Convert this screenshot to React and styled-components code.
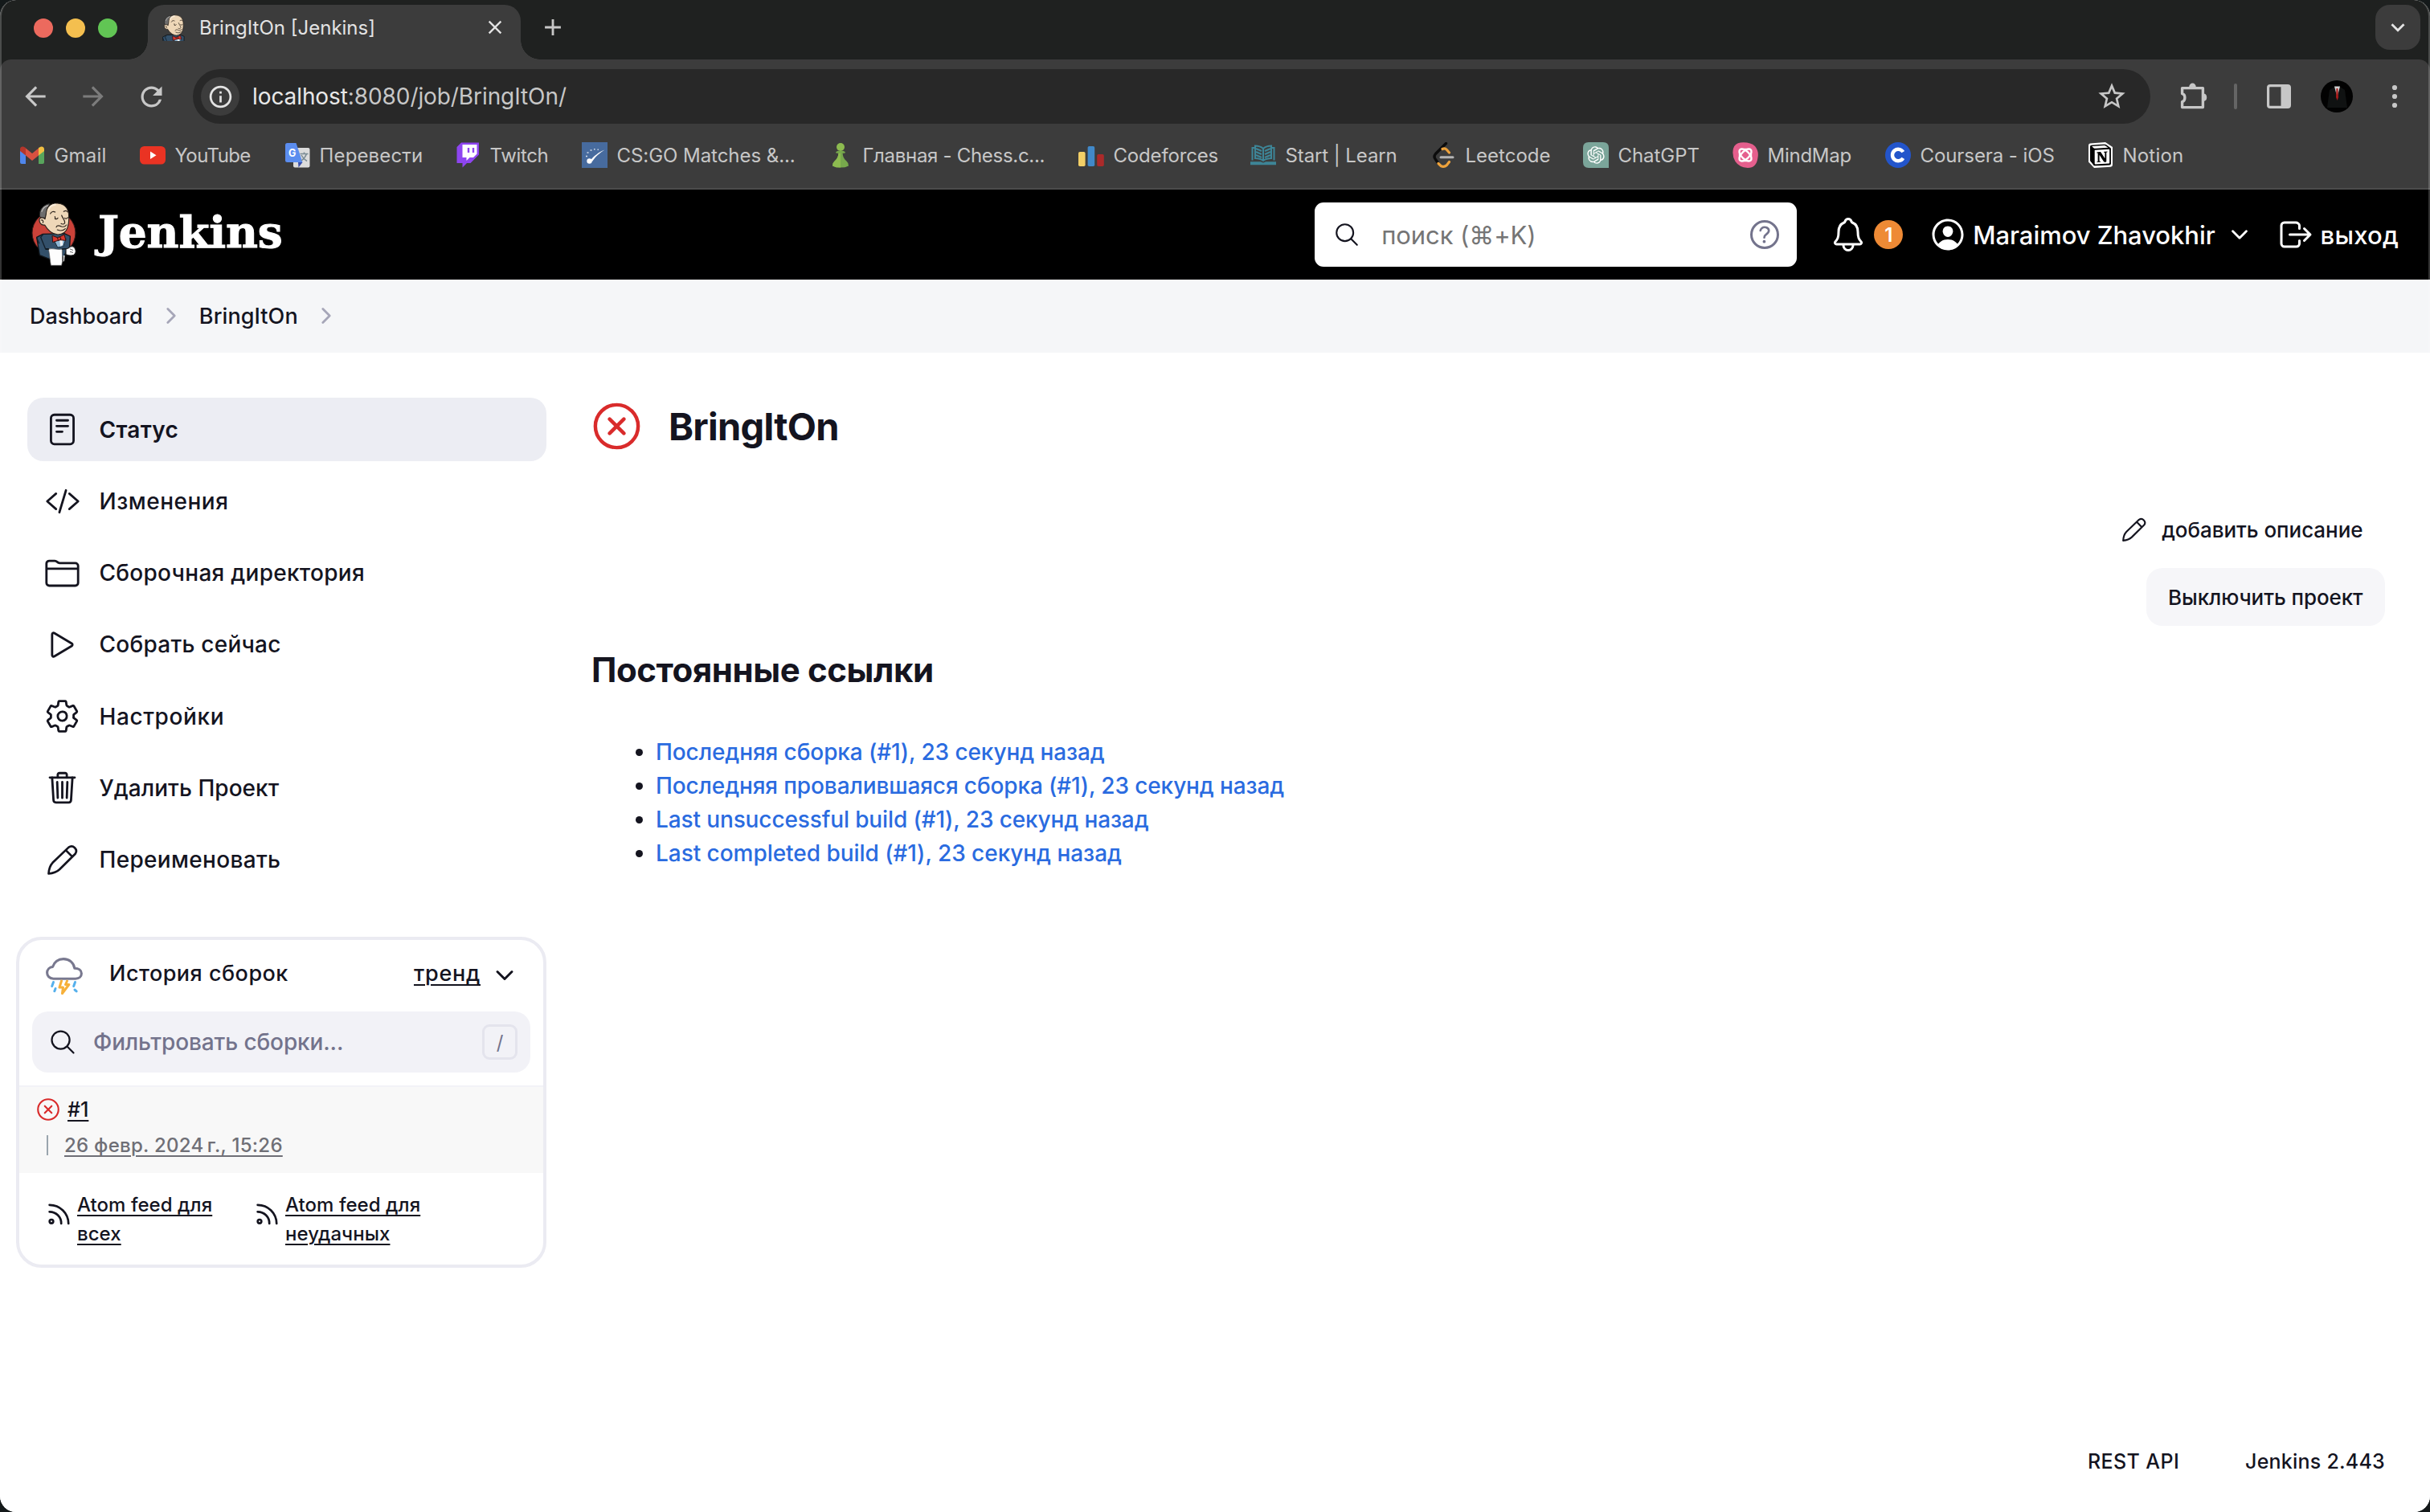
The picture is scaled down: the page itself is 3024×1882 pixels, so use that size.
import React from "react";
import styled, { createGlobalStyle } from "styled-components";
import {
  IoSearchOutline, IoHelpCircleOutline, IoPersonCircleOutline, IoNotificationsOutline, IoLogOutOutline,
  IoChevronDownOutline, IoChevronForwardOutline, IoReaderOutline, IoCodeSlashOutline, IoFolderOutline,
  IoPlayOutline, IoSettingsOutline, IoTrashOutline, IoCloseCircleOutline,
} from "react-icons/io5";
import { MdArrowBack, MdArrowForward, MdRefresh, MdInfoOutline, MdStarBorder, MdClose, MdAdd, MdExpandMore } from "react-icons/md";
import { SiNotion } from "react-icons/si";
import { RiOpenaiFill } from "react-icons/ri";

const GlobalStyle = createGlobalStyle`
  * { box-sizing: border-box; }
  html, body { margin: 0; padding: 0; background: #14191a; }
  body { font-family: Inter, "Noto Sans", "Liberation Sans", sans-serif; color: #14141f; overflow: hidden; }
  svg { display: block; flex: none; }
  h1, h2, ul { margin: 0; padding: 0; }
`;

const Text = styled.span`
  font-size: ${(p) => p.$size}px;
  font-weight: ${(p) => p.$weight || 500};
  letter-spacing: ${(p) => p.$track || 0}px;
  white-space: pre;
`;

/* ---------- browser window ---------- */

const Window = styled.div`
  position: relative;
  width: 3024px;
  height: 1882px;
  display: flex;
  flex-direction: column;
  border-radius: 20px;
  overflow: hidden;
  background: #fff;
`;

const WindowEdge = styled.div`
  position: absolute;
  inset: 0;
  border: 2px solid rgba(255, 255, 255, 0.2);
  border-top-width: 0;
  border-radius: 20px;
  pointer-events: none;
`;

const TabStrip = styled.div`
  height: 74px;
  flex: none;
  display: flex;
  background: #1f2120;
`;

const TrafficLights = styled.div`
  display: flex;
  gap: 16px;
  padding: 23px 0 0 42px;
  width: 184px;
`;

const Light = styled.span`
  width: 24px;
  height: 24px;
  border-radius: 50%;
  background: ${(p) => p.$color};
`;

const Tab = styled.div`
  position: relative;
  width: 464px;
  height: 68px;
  margin-top: 6px;
  padding: 0 18px 12px 18px;
  display: flex;
  align-items: center;
  border-radius: 20px 20px 0 0;
  background: #3c3c3c;
  color: #e3e3e3;
  &::before, &::after {
    content: "";
    position: absolute;
    bottom: 0;
    width: 24px;
    height: 24px;
  }
  &::before { left: -24px; background: radial-gradient(circle at 0 0, transparent 23.5px, #3c3c3c 24px); }
  &::after { right: -24px; background: radial-gradient(circle at 100% 0, transparent 23.5px, #3c3c3c 24px); }
`;

const TabTitle = styled(Text)`
  margin-left: 17px;
  flex: 1;
`;

const NewTab = styled.div`
  height: 68px;
  padding: 0 0 0 23px;
  display: flex;
  align-items: center;
  color: #c7c7c7;
`;

const TabMenu = styled.div`
  margin: 6px 12px 0 auto;
  width: 56px;
  height: 56px;
  border-radius: 18px;
  background: #3c3c3c;
  display: flex;
  align-items: center;
  justify-content: center;
  color: #e3e3e3;
`;

const ToolbarBack = styled.div`
  background: #1f2120;
  flex: none;
`;

const Toolbar = styled.div`
  height: 92px;
  padding-left: 8px;
  display: flex;
  align-items: center;
  background: #3c3c3c;
  border-radius: 14px 14px 0 0;
`;

const ToolButton = styled.span`
  width: 72px;
  height: 68px;
  margin-left: ${(p) => p.$before || 0}px;
  display: flex;
  align-items: center;
  justify-content: center;
  color: ${(p) => (p.$dim ? "#7c7c7c" : "#c7c7c7")};
`;

const ToolDivider = styled.span`
  width: 4px;
  height: 32px;
  border-radius: 2px;
  margin: 0 16px 0 14px;
  background: #656565;
`;

const Avatar = styled.svg`
  border-radius: 50%;
`;

const Omnibox = styled.div`
  width: 2436px;
  height: 68px;
  margin-left: 16px;
  padding: 0 28px 0 10px;
  display: flex;
  align-items: center;
  border-radius: 34px;
  background: #282828;
  color: #c7c7c7;
`;

const SiteInfo = styled.span`
  width: 48px;
  height: 48px;
  border-radius: 50%;
  background: #3c3c3c;
  color: #e3e3e3;
  display: flex;
  align-items: center;
  justify-content: center;
`;

const Url = styled(Text)`
  margin-left: 16px;
  flex: 1;
  b { font-weight: 400; color: #e8e8e8; }
`;

const Bookmarks = styled.div`
  height: 70px;
  flex: none;
  display: flex;
  align-items: center;
  padding: 0 0 14px 24px;
  background: #3c3c3c;
  border-bottom: 2px solid #4c4c4c;
  color: #c7c7c7;
`;

const Bookmark = styled.div`
  width: ${(p) => p.$width}px;
  flex: none;
  display: flex;
  align-items: center;
  gap: 11.5px;
`;

/* ---------- Jenkins page ---------- */

const Header = styled.header`
  height: 112px;
  flex: none;
  display: flex;
  align-items: center;
  padding: 0 39px;
  background: #000;
  color: #fff;
`;

const Brand = styled.span`
  margin: 0 auto 8px 27px;
  font: 700 55px "DejaVu Serif", serif;
  letter-spacing: -0.2px;
  -webkit-text-stroke: 1px #fff;
`;

const SearchBox = styled.div`
  width: 600px;
  height: 80px;
  border-radius: 11px;
  background: #fff;
  display: flex;
  align-items: center;
  padding: 0 16px 0 23px;
  color: #14141f;
`;

const Placeholder = styled(Text)`
  flex: 1;
  margin-left: ${(p) => p.$gap}px;
  color: ${(p) => p.$color};
`;

const HeaderItem = styled.span`
  display: flex;
  align-items: center;
  margin-left: ${(p) => p.$before}px;
  gap: ${(p) => p.$gap || 0}px;
`;

const Badge = styled.span`
  width: 36px;
  height: 36px;
  border-radius: 50%;
  background: #ee8a35;
  display: flex;
  align-items: center;
  justify-content: center;
`;

const Breadcrumbs = styled.nav`
  height: 91px;
  flex: none;
  display: flex;
  align-items: center;
  gap: 20px;
  padding: 0 0 1px 37px;
  background: #f5f6f8;
`;

const Page = styled.div`
  flex: 1;
  display: flex;
  background: #fff;
`;

const Sidebar = styled.aside`
  width: 680px;
  flex: none;
  padding: 56px 0 0 20px;
`;

const Tasks = styled.div`
  margin-left: 14px;
  display: flex;
  flex-direction: column;
  gap: 10.3px;
`;

const Task = styled.div`
  height: 79px;
  border-radius: 20px;
  display: flex;
  align-items: center;
  gap: 23.5px;
  padding-left: 21px;
  background: ${(p) => (p.$active ? "#ecedf3" : "transparent")};
`;

const IconSlot = styled.span`
  width: 45px;
  display: flex;
  justify-content: center;
`;

const BuildHistory = styled.section`
  margin-top: 56.4px;
  height: 412px;
  border: 4px solid #ebebf2;
  border-radius: 32px;
  overflow: hidden;
`;

const HistoryHead = styled.div`
  height: 89px;
  display: flex;
  align-items: center;
  padding: 0 32px 0 33px;
`;

const HistoryTitle = styled(Text)`
  margin: 0 auto 6px 33px;
`;

const Link = styled(Text)`
  color: ${(p) => p.$color || "#14141f"};
  line-height: ${(p) => p.$line || "inherit"};
  text-decoration: underline;
  text-decoration-thickness: 2.4px;
  text-underline-offset: 4px;
`;

const TrendLink = styled(Link)`
  margin: 0 14px 6px 0;
`;

const TrendToggle = styled.span`
  margin-bottom: 2px;
`;

const Filter = styled.div`
  height: 76px;
  margin: 0 16px 16px;
  border-radius: 20px;
  background: #f2f2f7;
  display: flex;
  align-items: center;
  padding: 0 16px 0 20px;
`;

const Key = styled.kbd`
  width: 44px;
  height: 44px;
  border: 3px solid #e4e4ed;
  border-radius: 9px;
  display: flex;
  align-items: center;
  justify-content: center;
  font: 400 24px Inter, sans-serif;
  color: #73738c;
`;

const BuildRow = styled.div`
  height: 109px;
  border-top: 2px solid #f2f2f7;
  background: #f8f8f8;
`;

const BuildName = styled.div`
  height: 56px;
  display: flex;
  align-items: center;
  gap: 7px;
  padding-left: 19px;
`;

const BuildDate = styled.div`
  height: 33px;
  display: flex;
  align-items: center;
  gap: 20px;
  padding-left: 34px;
`;

const DateBar = styled.span`
  width: 2px;
  height: 25px;
  background: #9aa5ae;
`;

const Feeds = styled.div`
  display: flex;
  padding: 22px 0 0 36px;
`;

const Feed = styled.div`
  width: 259px;
  display: flex;
  gap: 9px;
  align-items: flex-start;
`;

const FeedIcon = styled.svg`
  margin-top: 16px;
`;

const Main = styled.main`
  flex: 1;
  padding: 56px 56px 0 58px;
  display: flex;
  flex-direction: column;
`;

const TitleRow = styled.div`
  height: 71px;
  margin-left: -6px;
  display: flex;
  align-items: center;
  gap: 29px;
`;

const Title = styled.h1`
  font-size: 47px;
  font-weight: 700;
  letter-spacing: -0.8px;
`;

const Actions = styled.div`
  margin-top: 57px;
  display: flex;
  flex-direction: column;
  align-items: flex-end;
  gap: 12px;
`;

const Action = styled.button`
  height: 72px;
  padding: 0 27.5px;
  border: 0;
  border-radius: 20px;
  display: flex;
  align-items: center;
  gap: 19px;
  font-family: inherit;
  color: #14141f;
  background: ${(p) => (p.$filled ? "#f6f6f9" : "transparent")};
`;

const Subtitle = styled.h2`
  margin: 25px 0 0 -2px;
  font-size: 42px;
  line-height: 60px;
  font-weight: 700;
  letter-spacing: -0.41px;
`;

const Permalinks = styled.ul`
  margin-top: 51px;
  padding-left: 53px;
  list-style: none;
`;

const Permalink = styled.li`
  height: 42px;
  display: flex;
  align-items: center;
  gap: 16px;
  color: #2a6be0;
  &::before {
    content: "";
    width: 9px;
    height: 9px;
    border-radius: 50%;
    background: #14141f;
  }
`;

const Footer = styled.footer`
  margin-top: auto;
  display: flex;
  justify-content: flex-end;
  gap: 82px;
  padding-bottom: 43px;
  line-height: 40px;
`;

/* ---------- drawings ---------- */

const Butler = ({ width, height, viewBox, disc }) => (
  <svg width={width} height={height} viewBox={viewBox} strokeLinejoin="round" strokeLinecap="round">
    {disc && <circle cx="201" cy="162" r="81" fill="#cb4239" stroke="#3a1a18" strokeWidth="3" />}
    <path d="M160 166 L137 178 L148 245 L184 259 L240 250 L250 222 L260 218 L262 174 L240 164 Z" fill="#33506a" stroke="#10161b" strokeWidth="4" />
    <path d="M160 168 L152 178 L170 222 L182 222 M137 180 L146 200" fill="none" stroke="#14202b" strokeWidth="4" />
    <path d="M200 186 L215 216 L236 212 L246 184 Z" fill="#8fb6d3" stroke="#1b2a36" strokeWidth="3" />
    <path d="M222 188 L226 212 L234 206 L234 186 Z" fill="#f4f4f4" />
    <path d="M148 100 C146 76 158 58 186 52 L172 96 L166 110 Z" fill="#6d6c6c" stroke="#222" strokeWidth="3" />
    <path d="M156 82 C160 70 168 62 178 60" fill="none" stroke="#b5b3b1" strokeWidth="4" />
    <path d="M172 92 C173 62 190 50 214 51 C244 53 258 74 257 104 C258 116 256 130 252 142 C247 158 232 167 216 168 C196 166 178 152 167 132 C152 134 146 122 147 110 C152 102 164 104 168 110 Z" fill="#eed7b8" stroke="#28211c" strokeWidth="3.5" />
    <path d="M182 74 C184 66 194 58 206 56" fill="none" stroke="#f8ecd9" strokeWidth="7" />
    <path d="M188 90 C192 82 200 80 206 84 M238 82 C244 78 250 80 253 84 M205 108 C208 111 213 111 216 106 M205 101 L207 109 M241 106 C246 110 251 108 253 104 M230 96 C234 108 244 116 242 124 C240 130 232 130 228 127 M210 140 C214 130 224 136 230 138 C238 140 244 138 248 132 M214 150 C226 155 236 154 244 146 M154 114 C160 112 163 118 160 124" fill="none" stroke="#30261f" strokeWidth="3.5" />
    <path d="M196 172 L216 180 L240 168 L246 190 L224 188 L198 196 Z" fill="#d8382f" stroke="#36100d" strokeWidth="3" />
    <circle cx="221" cy="183" r="6" fill="#d8382f" stroke="#36100d" strokeWidth="3" />
    <path d="M246 222 L256 218 C264 208 274 212 278 216 C284 226 284 238 276 244 C266 248 256 246 246 242 Z" fill="#fff" stroke="#222" strokeWidth="3.5" />
    <path d="M262 222 L272 226 M262 232 L272 235" stroke="#444" strokeWidth="2.5" />
    <path d="M181 222 C198 218 216 226 232 222 L233 268 L230 283 L190 283 C186 262 186 244 181 222 Z" fill="#fdfdfd" stroke="#555" strokeWidth="2" />
    <path d="M236 246 L242 246 L240 266 L236 270 Z" fill="#ddd" />
    <path d="M172 222 L182 222 M232 222 L246 221" stroke="#10161b" strokeWidth="4" />
  </svg>
);

const Pencil = ({ size }) => (
  <svg width={size} height={size} viewBox="0 0 38 38" fill="none" stroke="#14141f" strokeWidth="2.7" strokeLinejoin="round" strokeLinecap="round">
    <path d="M1.5 36.5 C1.8 31 3.5 26 6.5 22.8 L26.5 3.6 a5.9 5.9 0 0 1 8.2 8.2 L15 31.2 C11.5 34.4 7 36 1.5 36.5 Z M23 7.4 l8 8" />
  </svg>
);

const Storm = () => (
  <svg width="46" height="46" viewBox="0 0 46 46" fill="none" strokeLinecap="round" strokeLinejoin="round">
    <path d="M9.5 26.2 C4.5 26.2 1.6 22.6 1.6 18.8 C1.6 14.8 4.6 11.8 8.6 11.4 C10.4 5.6 15.4 1.6 22 1.6 C29.4 1.6 34.8 6.4 35.8 13.2 C41 13.2 44.4 16 44.4 19.8 C44.4 23.6 41.4 26.2 37 26.2 Z" stroke="#78788f" strokeWidth="3.1" />
    <path d="M9.5 30.5 l-1.8 5 M36.5 30.5 l-1.8 5 M12 38.5 l-1.2 3.2 M36 40 l2.2 1.8" stroke="#55b0ec" strokeWidth="3" />
    <path d="M19.5 29 L17 37 H21.5 L20.5 44.5 L28.8 33.5 H24.5 L26.5 29" stroke="#f6b03a" strokeWidth="3" />
  </svg>
);

const Rss = () => (
  <FeedIcon width="27" height="27" viewBox="0 0 27 27" fill="none" stroke="#14141f" strokeWidth="2.7" strokeLinecap="round">
    <circle cx="4" cy="22.3" r="2.3" />
    <path d="M1.6 10.3 A14.4 14.4 0 0 1 16.2 25 M1.6 1.8 A23.4 23.4 0 0 1 25.2 25" />
  </FeedIcon>
);

const Puzzle = () => (
  <svg width="36" height="36" viewBox="0 0 36 36">
    <path d="M3.6 7.6 H29.4 V31.6 H3.6 V24.6 C8 23.8 8 15.4 3.6 14.6 Z" fill="none" stroke="#c7c7c7" strokeWidth="3.4" strokeLinejoin="round" />
    <path d="M12.2 6.2 a4.3 4.6 0 0 1 8.6 0 z M30.8 14.6 a4.3 4.8 0 0 1 0 9.4 z" fill="#c7c7c7" />
  </svg>
);

const SidePanel = () => (
  <svg width="30" height="30" viewBox="0 0 30 30">
    <rect x="1.6" y="1.6" width="26.8" height="26.8" rx="2.5" fill="none" stroke="#c7c7c7" strokeWidth="3.2" />
    <rect x="17.5" y="2" width="11" height="26" fill="#c7c7c7" />
  </svg>
);

const Suit = () => (
  <Avatar width="40" height="40" viewBox="0 0 40 40">
    <rect width="40" height="40" fill="#020202" />
    <path d="M11 12 L17 8 L24 8 L30 12 L33 34 H8 Z" fill="#101212" />
    <path d="M17 7.5 L24 7.5 L20.5 21 Z" fill="#d0d0d0" />
    <path d="M19.5 10 h1.8 l.7 11 l-1.4 4 l-1.6 -4 z" fill="#a81b1b" />
  </Avatar>
);

const Dots = () => (
  <svg width="8" height="30" viewBox="0 0 8 30" fill="#c7c7c7">
    <circle cx="4" cy="4" r="3.1" /><circle cx="4" cy="15" r="3.1" /><circle cx="4" cy="26" r="3.1" />
  </svg>
);

const Glyph = ({ children }) => <svg width="32" height="32" viewBox="0 0 32 32">{children}</svg>;

const glyphs = {
  gmail: (
    <Glyph>
      <path d="M1 9 V25 q0 2 2 2 H8 V14 Z" fill="#4f86ec" />
      <path d="M31 9 V25 q0 2 -2 2 H24 V14 Z" fill="#58a55c" />
      <path d="M24 7 L27 5.5 Q31 5 31 9 V11 L24 16.5 Z" fill="#f1bf42" />
      <path d="M8 7 L5 5.5 Q1 5 1 9 V11 L8 16.5 Z" fill="#b5362b" />
      <path d="M8 7.5 L16 14 L24 7.5 V16.5 L16 23 L8 16.5 Z" fill="#d95140" />
    </Glyph>
  ),
  youtube: (
    <Glyph>
      <rect x="0" y="5" width="32" height="22.5" rx="5.5" fill="#ea3323" />
      <path d="M13 11.5 L20.5 16.2 L13 21 Z" fill="#fff" />
    </Glyph>
  ),
  translate: (
    <Glyph>
      <rect x="11" y="7" width="20.5" height="24.5" rx="2" fill="#dcdcdc" />
      <path d="M17 25 L22.5 25 L17.5 31.5 Z" fill="#3c50a8" />
      <path d="M3.5 1 H14.5 L22.5 25 H3.5 Q1 25 1 22.5 V3.5 Q1 1 3.5 1 Z" fill="#5b8def" />
      <text x="5" y="18" fontFamily="Inter, sans-serif" fontSize="12.5" fontWeight="700" fill="#fff">G</text>
      <path d="M19.5 14.5 H29.5 M24.5 12.5 V14.5 M27.5 14.5 Q25.5 20 21 23 M21 16 Q23.5 21 28 23.5" fill="none" stroke="#7a8b94" strokeWidth="1.5" />
    </Glyph>
  ),
  twitch: (
    <Glyph>
      <path d="M8 0.5 L2.5 6 V26 H9.5 V31.5 L15 26 H19.5 L30 15.5 V0.5 Z" fill="#8e45f0" />
      <path d="M9.5 3 H27.5 V14.5 L23 19 H18.5 L14.5 23 V19 H9.5 Z" fill="#fff" />
      <path d="M17 7 V13 M23 7 V13" stroke="#8e45f0" strokeWidth="2.4" />
    </Glyph>
  ),
  csgo: (
    <Glyph>
      <rect width="32" height="32" fill="#476b9e" />
      <path d="M28.5 9.5 C22 12 14.5 17 9.5 24.5 L13 24 C17.5 17.5 22 13.5 28.5 9.5 Z" fill="#fff" />
      <circle cx="9.5" cy="23.5" r="3.2" fill="#fff" />
      <path d="M5 17.5 h2 M6.5 13 h2 M10.5 10 h2 M15 8.7 h1.6 M19.5 9.3 h1.4" stroke="#d5deea" strokeWidth="1.5" />
    </Glyph>
  ),
  chess: (
    <Glyph>
      <circle cx="16" cy="6" r="5" fill="#8dbb50" />
      <path d="M10 13 Q10 11.6 13 10.8 H19 Q22 11.6 22 13 Q22 13.8 18.6 13.8 C18.8 18 20.4 21 23.4 23.6 Q26.4 26.2 26 29.4 Q22 31.6 16 31.6 Q10 31.6 6 29.4 Q5.6 26.2 8.6 23.6 C11.6 21 13.2 18 13.4 13.8 Q10 13.8 10 13 Z" fill="#77a84c" />
      <path d="M13.4 13.8 H16 V31.6 Q10 31.6 6 29.4 Q5.6 26.2 8.6 23.6 C11.6 21 13.2 18 13.4 13.8 Z" fill="#8dbb50" />
    </Glyph>
  ),
  codeforces: (
    <Glyph>
      <rect x="0" y="12" width="8.6" height="18" rx="1.8" fill="#f2cf67" />
      <rect x="11.6" y="5" width="8.6" height="25" rx="1.8" fill="#4189c9" />
      <rect x="23.2" y="15" width="8.6" height="15" rx="1.8" fill="#ab2a2a" />
    </Glyph>
  ),
  book: (
    <Glyph>
      <path d="M0 24.3 H13 Q16 26.5 19 24.3 H32 V28.2 H0 Z" fill="#3d8597" />
      <path d="M2.5 22.5 V7 H5 M29.5 22.5 V7 H27 M6 4.5 Q12 4.5 16 8 Q20 4.5 26 4.5 V20 Q20 20 16 23 Q12 20 6 20 Z M16 8 V23" fill="none" stroke="#3d8597" strokeWidth="2" />
      <path d="M7 8 L14 11 M7 12 L14 15 M7 16 L14 19 M25 8 L18 11 M25 12 L18 15 M25 16 L18 19" stroke="#3d8597" strokeWidth="2.4" />
    </Glyph>
  ),
  leetcode: (
    <Glyph>
      <path d="M19.5 1.5 L6.5 14.5 Q3.5 18 6.5 21.5 L10 26.5" fill="none" stroke="#0c0c0c" strokeWidth="3.4" strokeLinecap="round" />
      <path d="M15 8.5 Q18 6.8 20.5 9.5 L23.5 13 M10 26.5 L13 29.5 Q17 31.5 20.5 28.5 L23.5 24.5" fill="none" stroke="#eda23c" strokeWidth="3.2" strokeLinecap="round" />
      <path d="M13 18.8 H28" stroke="#b4b4b4" strokeWidth="3" strokeLinecap="round" />
    </Glyph>
  ),
  chatgpt: (
    <Glyph>
      <path d="M7 0 H25 Q32 0 32 7 V32 H7 Q0 32 0 25 V7 Q0 0 7 0 Z" fill="#7ba59a" />
      <RiOpenaiFill x="3" y="3" size={26} color="#fff" />
    </Glyph>
  ),
  mindmap: (
    <Glyph>
      <path d="M10 0.5 Q22 -0.5 28 5 Q33 11 31.5 19 Q30 32 19 32 Q8 31 3.5 24 Q-1 16 1 8 Q3 1 10 0.5 Z" fill="#e55f8d" />
      <g fill="none" stroke="#fff" strokeWidth="2.2">
        <ellipse cx="16" cy="16" rx="9.5" ry="4.8" transform="rotate(45 16 16)" />
        <ellipse cx="16" cy="16" rx="9.5" ry="4.8" transform="rotate(-45 16 16)" />
        <rect x="8.5" y="8.5" width="15" height="15" rx="4" strokeWidth="1.4" />
      </g>
    </Glyph>
  ),
  coursera: (
    <Glyph>
      <circle cx="16" cy="16" r="16" fill="#2355cb" />
      <path d="M22.3 12.2 A7.2 7.2 0 1 0 22.3 19.8" fill="none" stroke="#fff" strokeWidth="4.4" />
    </Glyph>
  ),
  notion: (
    <Glyph>
      <path d="M3 1.5 L22 0 L31 6 V28 Q31 30.5 28.5 30.7 L8 32 L1 24.5 V4 Q1 1.8 3 1.5 Z" fill="#fff" />
      <path d="M3.5 6 L8.5 10 V29 L3.5 23.500 Z" fill="#000" />
      <SiNotion x="2.5" y="2.5" size={27} color="#000" />
    </Glyph>
  ),
};

const bookmarks = [
  ["gmail", "Gmail", 0.2, 150], ["youtube", "YouTube", -0.6, 180], ["translate", "Перевести", 0.15, 212],
  ["twitch", "Twitch", -0.35, 158], ["csgo", "CS:GO Matches &...", -0.05, 306], ["chess", "Главная - Chess.c...", -0.3, 312],
  ["codeforces", "Codeforces", -0.17, 214], ["book", "Start | Learn", -0.1, 224], ["leetcode", "Leetcode", 0, 190],
  ["chatgpt", "ChatGPT", -0.05, 186], ["mindmap", "MindMap", -0.25, 190], ["coursera", "Coursera - iOS", -0.08, 252],
  ["notion", "Notion", 0.2, 130],
];

const tasks = [
  [<IoReaderOutline size={45} />, "Статус", 0.29, true],
  [<IoCodeSlashOutline size={44} />, "Изменения", 0.5],
  [<IoFolderOutline size={45} />, "Сборочная директория", 0.28],
  [<IoPlayOutline size={45} />, "Собрать сейчас", 0.24],
  [<IoSettingsOutline size={45} />, "Настройки", 0.6],
  [<IoTrashOutline size={45} />, "Удалить Проект", 0.05],
  [<Pencil size={38} />, "Переименовать", 0.32],
];

const permalinks = [
  ["Последняя сборка (#1), 23 секунд назад", -0.09],
  ["Последняя провалившаяся сборка (#1), 23 секунд назад", -0.12],
  ["Last unsuccessful build (#1), 23 секунд назад", -0.12],
  ["Last completed build (#1), 23 секунд назад", -0.04],
];

const feeds = [["Atom feed для\nвсех", 0.06], ["Atom feed для\nнеудачных", 0.06]];

const Browser = () => (
  <>
    <TabStrip>
      <TrafficLights>
        <Light $color="#ec6a5e" />
        <Light $color="#f4bf4f" />
        <Light $color="#61c554" />
      </TrafficLights>
      <Tab>
        <Butler width={29} height={33} viewBox="143 47 120 153" />
        <TabTitle $size={24} $weight={400}>BringItOn [Jenkins]</TabTitle>
        <MdClose size={28} />
      </Tab>
      <NewTab><MdAdd size={34} /></NewTab>
      <TabMenu><MdExpandMore size={34} /></TabMenu>
    </TabStrip>
    <ToolbarBack>
      <Toolbar>
        <ToolButton><MdArrowBack size={38} /></ToolButton>
        <ToolButton $dim><MdArrowForward size={38} /></ToolButton>
        <ToolButton><MdRefresh size={39} /></ToolButton>
        <Omnibox>
          <SiteInfo><MdInfoOutline size={33} /></SiteInfo>
          <Url $size={28} $weight={400} $track={-0.09}><b>localhost</b>:8080/job/BringItOn/</Url>
          <MdStarBorder size={40} />
        </Omnibox>
        <ToolButton $before={18}><Puzzle /></ToolButton>
        <ToolDivider />
        <ToolButton><SidePanel /></ToolButton>
        <ToolButton><Suit /></ToolButton>
        <ToolButton><Dots /></ToolButton>
      </Toolbar>
    </ToolbarBack>
    <Bookmarks>
      {bookmarks.map(([icon, label, track, width]) => (
        <Bookmark key={icon} $width={width}>
          {glyphs[icon]}
          <Text $size={24} $weight={400} $track={track}>{label}</Text>
        </Bookmark>
      ))}
    </Bookmarks>
  </>
);

export default function App() {
  return (
    <>
      <GlobalStyle />
      <Window>
        <Browser />
        <Header>
          <Butler width={56} height={80} viewBox="117 48 168 240" disc />
          <Brand>Jenkins</Brand>
          <SearchBox>
            <IoSearchOutline size={34} />
            <Placeholder $size={31} $weight={400} $track={-0.1} $gap={26} $color="#757575">поиск (⌘+K)</Placeholder>
            <IoHelpCircleOutline size={48} color="#73738c" />
          </SearchBox>
          <HeaderItem $before={40} $gap={8}>
            <IoNotificationsOutline size={48} />
            <Badge><Text $size={24} $weight={600}>1</Text></Badge>
          </HeaderItem>
          <HeaderItem $before={32} $gap={7}>
            <IoPersonCircleOutline size={48} />
            <Text $size={31} $track={-0.05}>Maraimov Zhavokhir</Text>
          </HeaderItem>
          <HeaderItem $before={15}><IoChevronDownOutline size={30} /></HeaderItem>
          <HeaderItem $before={31} $gap={7}>
            <IoLogOutOutline size={48} />
            <Text $size={31} $track={0.2}>выход</Text>
          </HeaderItem>
        </Header>
        <Breadcrumbs>
          <Text $size={27}>Dashboard</Text>
          <IoChevronForwardOutline size={30} color="#a6a6b8" />
          <Text $size={27} $track={0.08}>BringItOn</Text>
          <IoChevronForwardOutline size={30} color="#a6a6b8" />
        </Breadcrumbs>
        <Page>
          <Sidebar>
            <Tasks>
              {tasks.map(([icon, label, track, active]) => (
                <Task key={label} $active={active}>
                  <IconSlot>{icon}</IconSlot>
                  <Text $size={28} $weight={active ? 600 : 500} $track={track}>{label}</Text>
                </Task>
              ))}
            </Tasks>
            <BuildHistory>
              <HistoryHead>
                <Storm />
                <HistoryTitle $size={27} $track={0.48}>История сборок</HistoryTitle>
                <TrendLink $size={27} $track={0.72}>тренд</TrendLink>
                <TrendToggle><IoChevronDownOutline size={32} /></TrendToggle>
              </HistoryHead>
              <Filter>
                <IoSearchOutline size={36} />
                <Placeholder $size={28} $track={-0.12} $gap={20} $color="#73738c">Фильтровать сборки...</Placeholder>
                <Key>/</Key>
              </Filter>
              <BuildRow>
                <BuildName>
                  <IoCloseCircleOutline size={34} color="#d92b2b" />
                  <Link $size={25}>#1</Link>
                </BuildName>
                <BuildDate>
                  <DateBar />
                  <Link $size={24} $track={0.26} $color="#6f6f76">{"26 февр. 2024\u202fг., 15:26"}</Link>
                </BuildDate>
              </BuildRow>
              <Feeds>
                {feeds.map(([label, track]) => (
                  <Feed key={label}>
                    <Rss />
                    <Link $size={24} $track={track} $line="36px">{label}</Link>
                  </Feed>
                ))}
              </Feeds>
            </BuildHistory>
          </Sidebar>
          <Main>
            <TitleRow>
              <IoCloseCircleOutline size={71} color="#d92b2b" />
              <Title>BringItOn</Title>
            </TitleRow>
            <Actions>
              <Action>
                <Pencil size={30} />
                <Text $size={26} $track={-0.05}>добавить описание</Text>
              </Action>
              <Action $filled>
                <Text $size={26} $track={-0.08}>Выключить проект</Text>
              </Action>
            </Actions>
            <Subtitle>Постоянные ссылки</Subtitle>
            <Permalinks>
              {permalinks.map(([label, track]) => (
                <Permalink key={label}>
                  <Text $size={28} $track={track}>{label}</Text>
                </Permalink>
              ))}
            </Permalinks>
            <Footer>
              <Text $size={25} $track={0.4}>REST API</Text>
              <Text $size={25} $track={0.22}>Jenkins 2.443</Text>
            </Footer>
          </Main>
        </Page>
        <WindowEdge />
      </Window>
    </>
  );
}
